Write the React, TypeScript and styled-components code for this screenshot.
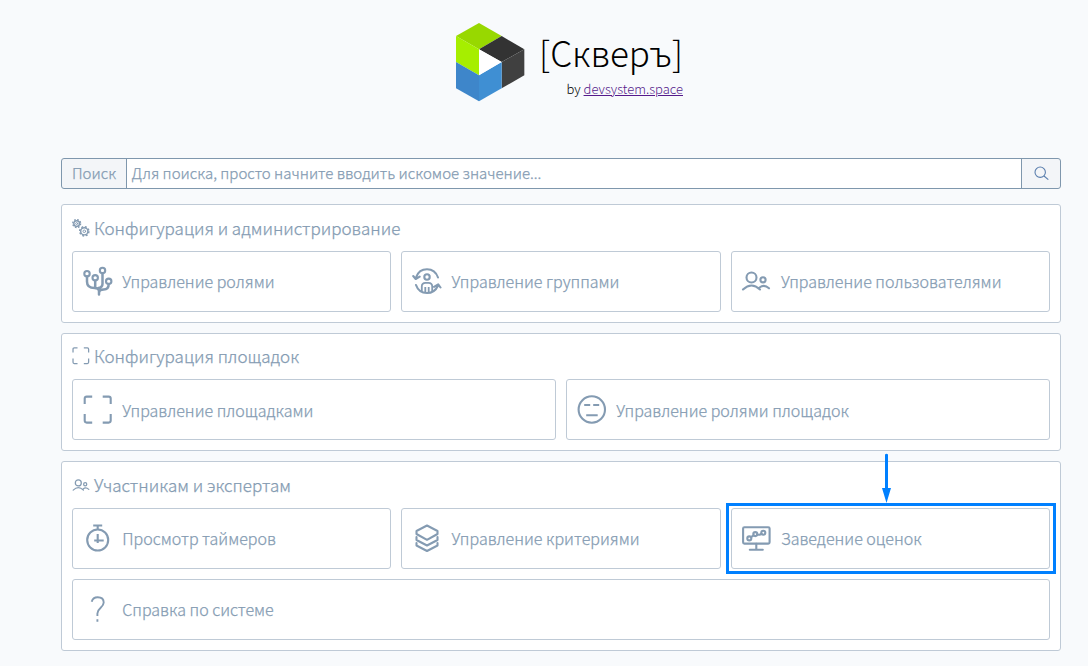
import React from "react";
import styled, { createGlobalStyle } from "styled-components";

const Global = createGlobalStyle`
  * { box-sizing: border-box; }
  body {
    margin: 0;
    background: #f8fafc;
    color: #849bb2;
    font-family: "Noto Sans CJK SC", "Noto Sans", sans-serif;
    font-weight: 300;
  }
`;

const Page = styled.main`
  width: 1000px;
  height: 666px;
  margin-left: 61px;
  padding-top: 23px;
  overflow: hidden;
`;
const Brand = styled.header`
  display: flex;
  height: 135px;
  padding-left: 395px;
  gap: 16px;
`;
const BrandText = styled.div`
  display: flex;
  flex-direction: column;
  align-items: flex-end;
  width: 142px;
  color: #000;
`;
const Title = styled.h1`
  margin: 4px 0 0;
  height: 52px;
  font-size: 35px;
  line-height: 50px;
  font-weight: 300;
  white-space: nowrap;
`;
const Byline = styled.div`
  font-size: 13px;
  line-height: 20px;
  white-space: nowrap;
`;
const BrandLink = styled.a`
  color: #551a8b;
  text-decoration: underline;
`;
const Search = styled.form`
  display: grid;
  grid-template-columns: 64px 1fr 38px;
  height: 31px;
  border: 1px solid #7f97ad;
  border-radius: 3px;
  overflow: hidden;
  background: #f3f5f8;
  -webkit-text-stroke: 0.25px currentColor;
`;
const SearchLabel = styled.label`
  padding-left: 10px;
  font-size: 15px;
  line-height: 27px;
`;
const SearchField = styled.div`
  padding-left: 4.5px;
  border: solid #7f97ad;
  border-width: 0 1px;
  background: #fff;
  font-size: 15px;
  line-height: 27px;
  white-space: nowrap;
`;
const SearchButton = styled.button`
  display: flex;
  align-items: center;
  justify-content: center;
  padding: 0;
  border: 0;
  background: none;
  color: #5b7fae;
`;
const Sections = styled.div`
  display: flex;
  flex-direction: column;
  gap: 10px;
  padding-top: 15.4px;
`;
const Section = styled.section`
  padding: 10px;
  border: 1px solid #bfcad6;
  border-radius: 3px;
  background: #fff;
`;
const Heading = styled.h2`
  display: flex;
  align-items: center;
  gap: 4px;
  height: 35.4px;
  margin: 0;
  padding-bottom: 11.4px;
  font-size: 17px;
  font-weight: 300;
  white-space: nowrap;

  svg {
    margin-top: 1px;
  }
`;
const Cards = styled.div<{ $columns: number }>`
  display: grid;
  grid-template-columns: repeat(${(p) => p.$columns}, 1fr);
  gap: 10px;
`;
const Card = styled.div<{ $wide?: boolean }>`
  position: relative;
  display: flex;
  align-items: center;
  gap: 9.6px;
  height: 61px;
  padding-left: 9.7px;
  border: 1px solid #bfcad6;
  border-radius: 3px;
  font-size: 16px;
  white-space: nowrap;
  ${(p) => p.$wide && "grid-column: 1 / -1;"}
`;
const Label = styled.span`
  -webkit-text-stroke: 0.25px currentColor;
`;
const Highlight = styled.div`
  position: absolute;
  inset: -6px -7px -6px -6px;
  border: 3px solid #0080ff;
`;
const Arrow = styled.svg`
  position: absolute;
  left: 149px;
  top: -57px;
`;
const Glyph = styled.svg`
  flex: none;
  fill: none;
  stroke: currentColor;
  stroke-width: 2.1;
  stroke-linecap: round;
  stroke-linejoin: round;
`;

const Logo = () => (
  <svg width="69" height="79" viewBox="48 38 207 237">
    <path fill="#98d800" d="M117 38 185 77 117 117 48 77Z" />
    <path fill="#a6ee00" d="M48 77 117 117V195L48 155Z" />
    <path fill="#333" d="M185 77 253 117 185 155 117 117Z" />
    <path fill="#404040" d="M185 155 253 117V195L185 234Z" />
    <path fill="#3e86ca" d="M48 155 117 195V273L48 234Z" />
    <path fill="#3f8fd3" d="M117 195 185 155V234L117 273Z" />
    <path fill="#fff" d="M117 117 185 155 117 195Z" />
  </svg>
);

type IconName = "gears" | "branches" | "group" | "users" | "frame" | "face" | "timer" | "layers" | "board" | "help";

const gear = (cx: number, cy: number, r: number) => (
  <>
    <circle cx={cx} cy={cy} r={r} strokeWidth="2.4" />
    <circle cx={cx} cy={cy} r={r * 0.36} strokeWidth="1.6" />
    <circle cx={cx} cy={cy} r={r + 1.7} strokeWidth="2.4" strokeLinecap="butt" strokeDasharray={`${(r + 1.7) * 0.42} ${(r + 1.7) * 0.3654}`} />
  </>
);

const shapes: Record<IconName, React.ReactNode> = {
  gears: (<>{gear(7.8, 7.6, 4.8)}{gear(20.5, 20.5, 6)}</>),
  branches: (
    <g transform="translate(0 .5)">
      <circle cx="4" cy="7.2" r="2.7" /><circle cx="12.2" cy="11.3" r="2.7" />
      <circle cx="19.5" cy="4" r="2.7" /><circle cx="25.7" cy="14.8" r="2.7" />
      <path d="M4 10v5.2c0 5 3.4 6.3 7.6 6.4 2.7.1 4.4 1 4.4 3.2V28M12.2 14v7.4M19.5 6.8v10.4c0 2.8-2 4-4.2 4.2M25.7 17.6c0 3.7-2.2 5.5-5 5.5-3 0-4.7.9-4.7 3.6" strokeWidth="2.5" />
    </g>
  ),
  group: (
    <>
      <circle cx="15" cy="11" r="2.7" />
      <path strokeLinecap="butt" strokeWidth="1.8" d="M9.8 25.5v-5q0-3.7 3.7-3.7h3q3.7 0 3.7 3.7v5M13.3 21v6M16.7 21v6" />
      <path d="M4.2 11C6 6 10 3.2 15 3.2c5.2 0 9.2 3 11 8.3M1.2 10l2.5 3 4-2.3M4 19c1.8 5.2 5.8 8 11 8 4.6 0 8.6-2.2 10.8-7M22 20.8l4.2-2.5 2.3 3.2" />
    </>
  ),
  users: (
    <g transform="translate(0 1)">
      <circle cx="10.5" cy="10.5" r="5" /><circle cx="22" cy="12.8" r="2.6" />
      <path d="M2 22.5q8.5-8 17 0M18.5 20.5q4.8-3.5 9.5.8" />
    </g>
  ),
  frame: <path strokeLinecap="butt" d="M2 9.5V4q0-2 2-2h5.5M20 2h6q2 0 2 2v5.5M2 19.5V26q0 2 2 2h5.5M20 28h6q2 0 2-2v-6.5" transform="translate(-.3 -.4)" />,
  face: (<><circle cx="14.8" cy="14.5" r="13.2" /><path strokeLinecap="butt" d="M7.2 10h6M16.2 10h6M9.2 20.2h11.5" /></>),
  timer: (<><circle cx="14.7" cy="17" r="10.5" /><path strokeLinecap="butt" d="M10.2 2.5h9M14.7 2.5v4M14.7 11v9M11.2 17.5h9.5" /></>),
  layers: <path d="M15 2.5 25.5 8v3L15 16.8 4.5 11V8ZM4.5 14v3L15 22.5 25.5 17v-3M4.5 20v2.5L15 28l10.5-5.5V20" />,
  board: (
    <g transform="translate(.3 .3)">
      <rect x="1.8" y="4" width="26.5" height="16.3" rx="1.3" />
      <circle cx="8" cy="15.1" r="2" /><circle cx="14" cy="10.8" r="2" /><circle cx="22" cy="9.5" r="2" />
      <path d="m9.7 13.8 2.6-1.8M15.8 11.5h2.5l2-1M15 20.5v6M8.5 26.5h13" />
    </g>
  ),
  help: <path strokeWidth="1.9" strokeLinecap="butt" d="M8.7 7.8C9.5 4.6 11.7 3.3 14.7 3.3c3.7 0 6 2 6 5.3 0 5.1-6.3 5.4-6.3 11v2.5M14.4 25.3v2.5" />,
};

const Icon = ({ name, size = 30 }: { name: IconName; size?: number }) => (
  <Glyph width={size} height={size} viewBox="0 0 30 30">{shapes[name]}</Glyph>
);

type Item = { icon: IconName; text: string; wide?: boolean; marked?: boolean };
type Group = { icon: IconName; title: string; columns: number; items: Item[] };

const groups: Group[] = [
  {
    icon: "gears", title: "Конфигурация и администрирование", columns: 3,
    items: [
      { icon: "branches", text: "Управление ролями" },
      { icon: "group", text: "Управление группами" },
      { icon: "users", text: "Управление пользователями" },
    ],
  },
  {
    icon: "frame", title: "Конфигурация площадок", columns: 2,
    items: [
      { icon: "frame", text: "Управление площадками" },
      { icon: "face", text: "Управление ролями площадок" },
    ],
  },
  {
    icon: "users", title: "Участникам и экспертам", columns: 3,
    items: [
      { icon: "timer", text: "Просмотр таймеров" },
      { icon: "layers", text: "Управление критериями" },
      { icon: "board", text: "Заведение оценок", marked: true },
      { icon: "help", text: "Справка по системе", wide: true },
    ],
  },
];

export default function App() {
  return (
    <>
      <Global />
      <Page>
        <Brand>
          <Logo />
          <BrandText>
            <Title>[Скверъ]</Title>
            <Byline>by <BrandLink href="#">devsystem.space</BrandLink></Byline>
          </BrandText>
        </Brand>
        <Search>
          <SearchLabel>Поиск</SearchLabel>
          <SearchField>Для поиска, просто начните вводить искомое значение...</SearchField>
          <SearchButton type="button" aria-label="Поиск">
            <svg width="15" height="15" viewBox="0 0 15 15" fill="none" stroke="currentColor" strokeWidth="1.1">
              <circle cx="6.2" cy="6.2" r="5.2" /><path d="m10 10 4.3 3.7" />
            </svg>
          </SearchButton>
        </Search>
        <Sections>
          {groups.map((g) => (
            <Section key={g.title}>
              <Heading><Icon name={g.icon} size={18} /><Label>{g.title}</Label></Heading>
              <Cards $columns={g.columns}>
                {g.items.map((item) => (
                  <Card key={item.text} $wide={item.wide}>
                    <Icon name={item.icon} />
                    <Label>{item.text}</Label>
                    {item.marked && (
                      <>
                        <Highlight />
                        <Arrow width="11" height="52" viewBox="0 0 11 52" fill="#0080ff">
                          <path d="M4 2.5q1.5-1.5 3 0V36h3L5.5 51 1 36h3Z" />
                        </Arrow>
                      </>
                    )}
                  </Card>
                ))}
              </Cards>
            </Section>
          ))}
        </Sections>
      </Page>
    </>
  );
}
